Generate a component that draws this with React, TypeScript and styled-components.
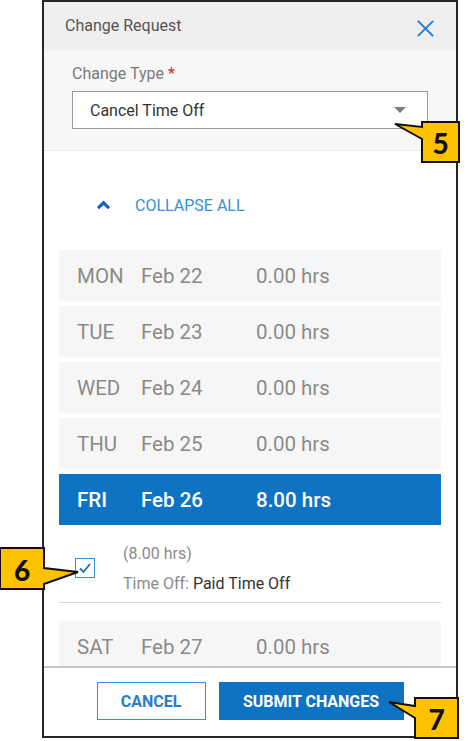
import React from 'react';
import styled, { createGlobalStyle } from 'styled-components';

const GlobalStyle = createGlobalStyle`
  html, body {
    margin: 0;
    padding: 0;
    background: #fff;
  }
  body {
    font-family: Roboto, "Noto Sans", Arial, sans-serif;
  }
  * {
    box-sizing: border-box;
  }
`;

const BLUE = '#0f73c4';

const Stage = styled.div`
  position: relative;
  width: 468px;
  height: 741px;
  overflow: hidden;
`;

const Panel = styled.div`
  margin-left: 42px;
  width: 416px;
  height: 738px;
  border: 2px solid #262626;
  display: flex;
  flex-direction: column;
  overflow: hidden;
  background: #fff;
`;

const Header = styled.div`
  height: 49px;
  flex-shrink: 0;
  background: #efefef;
  display: flex;
  align-items: center;
  justify-content: space-between;
  padding: 0 22px 0 21px;
`;

const Title = styled.div`
  font-size: 16px;
  color: #555;
  margin-top: -2px;
`;

const CloseButton = styled.button`
  border: none;
  background: none;
  padding: 0;
  margin-top: 3px;
  width: 17px;
  height: 17px;
  display: flex;
  cursor: pointer;
`;

const TypeSection = styled.div`
  flex-shrink: 0;
  height: 100px;
  background: #f7f7f7;
  border-bottom: 1px solid #e9e9e9;
  padding: 13px 28px 0 28px;
`;

const FieldLabel = styled.div`
  font-size: 16px;
  color: #7a7a7a;
  margin-bottom: 8px;
  span {
    color: #d9262e;
  }
`;

const SelectBox = styled.div`
  height: 38px;
  border: 1px solid #9a9a9a;
  background: #fff;
  display: flex;
  align-items: center;
  justify-content: space-between;
  padding: 0 21px 0 17px;
  font-size: 16px;
  color: #333;
`;

const Caret = styled.div`
  width: 0;
  height: 0;
  border-left: 6px solid transparent;
  border-right: 6px solid transparent;
  border-top: 6px solid #7a7a7a;
`;

const Scroll = styled.div`
  flex: 1;
  overflow: hidden;
  padding: 0 15px 0 15px;
`;

const CollapseRow = styled.div`
  height: 24px;
  margin: 42px 0 33px 37px;
  display: flex;
  align-items: center;
  gap: 24px;
  font-size: 16px;
  color: #3a8fd7;
  cursor: pointer;
`;

const DayRow = styled.div<{ $active?: boolean }>`
  height: 51px;
  margin-bottom: ${(p) => (p.$active ? '0' : '5px')};
  display: flex;
  align-items: center;
  padding-left: 18px;
  font-size: 20.5px;
  background: ${(p) => (p.$active ? BLUE : '#f6f6f6')};
  color: ${(p) => (p.$active ? '#fff' : '#8a8a8a')};
  font-weight: ${(p) => (p.$active ? 500 : 400)};
`;

const DayName = styled.div`
  width: 64px;
`;

const DayDate = styled.div`
  width: 115px;
`;

const Detail = styled.div`
  display: flex;
  align-items: center;
  padding: 19px 0 9px 16px;
  border-bottom: 1.5px solid #d4d4d4;
  margin-bottom: 18px;
`;

const Check = styled.div`
  width: 20px;
  height: 20px;
  border: 1.5px solid #3b90d8;
  background: #fff;
  display: flex;
  align-items: center;
  justify-content: center;
  margin-right: 28px;
  margin-top: -2px;
`;

const DetailText = styled.div`
  display: flex;
  flex-direction: column;
  gap: 11px;
  font-size: 16px;
  line-height: 19px;
  color: #8a8a8a;
  b {
    font-weight: 400;
    color: #333;
  }
`;

const Footer = styled.div`
  flex-shrink: 0;
  height: 70px;
  border-top: 2px solid #c6c6c6;
  display: flex;
  align-items: center;
  justify-content: center;
  gap: 13px;
  padding-bottom: 2px;
`;

const Button = styled.button<{ $primary?: boolean }>`
  height: 38px;
  padding: 0;
  width: ${(p) => (p.$primary ? '185px' : '109px')};
  border: ${(p) => (p.$primary ? `1px solid ${BLUE}` : '1.5px solid #3a8fd7')};
  background: ${(p) => (p.$primary ? BLUE : '#fff')};
  color: ${(p) => (p.$primary ? '#fff' : '#2b7cc9')};
  font-family: Roboto, Arial, sans-serif;
  font-weight: 700;
  font-size: 16px;
  cursor: pointer;
`;

/* numbered yellow callouts that sit over the screenshot */
const CalloutWrap = styled.div<{ $x: number; $y: number; $w: number; $h: number }>`
  position: absolute;
  left: ${(p) => p.$x}px;
  top: ${(p) => p.$y}px;
  width: ${(p) => p.$w}px;
  height: ${(p) => p.$h}px;
  pointer-events: none;
  svg {
    position: absolute;
    left: 0;
    top: 0;
    overflow: visible;
  }
`;

const CalloutNum = styled.div<{ $x: number; $y: number; $w: number; $h: number }>`
  position: absolute;
  left: ${(p) => p.$x}px;
  top: ${(p) => p.$y}px;
  width: ${(p) => p.$w}px;
  height: ${(p) => p.$h}px;
  display: flex;
  align-items: center;
  justify-content: center;
  font-family: Lato, "Open Sans", Arial, sans-serif;
  font-weight: 900;
  font-size: 28px;
  color: #111;
  padding-top: 2px;
`;

type Box = { x: number; y: number; w: number; h: number };

function Callout({ n, box, tip, y1, y2 }: { n: string; box: Box; tip: [number, number]; y1: number; y2: number }) {
  const left = tip[0] < box.x;
  const minX = Math.min(box.x, tip[0]);
  const maxX = Math.max(box.x + box.w, tip[0]);
  const minY = Math.min(box.y, tip[1]);
  const maxY = Math.max(box.y + box.h, tip[1]);
  const ox = (v: number) => v - minX;
  const oy = (v: number) => v - minY;
  const bx = box.x, by = box.y, bw = box.w, bh = box.h;
  const pts = left
    ? [[bx, by], [bx + bw, by], [bx + bw, by + bh], [bx, by + bh], [bx, y2], [tip[0], tip[1]], [bx, y1]]
    : [[bx, by], [bx + bw, by], [bx + bw, y1], [tip[0], tip[1]], [bx + bw, y2], [bx + bw, by + bh], [bx, by + bh]];
  return (
    <CalloutWrap $x={minX} $y={minY} $w={maxX - minX} $h={maxY - minY}>
      <svg width={maxX - minX} height={maxY - minY}>
        <polygon
          points={pts.map(([a, b]) => `${ox(a)},${oy(b)}`).join(' ')}
          fill="#fec200"
          stroke="#111"
          strokeWidth="2"
          strokeLinejoin="miter"
        />
      </svg>
      <CalloutNum $x={ox(bx)} $y={oy(by)} $w={bw} $h={bh}>{n}</CalloutNum>
    </CalloutWrap>
  );
}

const days = [
  { d: 'MON', date: 'Feb 22', hrs: '0.00 hrs' },
  { d: 'TUE', date: 'Feb 23', hrs: '0.00 hrs' },
  { d: 'WED', date: 'Feb 24', hrs: '0.00 hrs' },
  { d: 'THU', date: 'Feb 25', hrs: '0.00 hrs' },
];

export default function App() {
  return (
    <Stage>
      <GlobalStyle />
      <Panel>
        <Header>
          <Title>Change Request</Title>
          <CloseButton aria-label="close">
            <svg width="17" height="17" viewBox="0 0 17 17">
              <path d="M1.5 1.5 L15.5 15.5 M15.5 1.5 L1.5 15.5" stroke="#2a7fd2" strokeWidth="1.9" strokeLinecap="square" />
            </svg>
          </CloseButton>
        </Header>

        <TypeSection>
          <FieldLabel>
            Change Type <span>*</span>
          </FieldLabel>
          <SelectBox>
            Cancel Time Off
            <Caret />
          </SelectBox>
        </TypeSection>

        <Scroll>
          <CollapseRow>
            <svg width="15" height="10" viewBox="0 0 15 10">
              <polyline points="2,8.2 7.5,2.8 13,8.2" fill="none" stroke="#1766b5" strokeWidth="3.2" />
            </svg>
            COLLAPSE ALL
          </CollapseRow>

          {days.map((r) => (
            <DayRow key={r.d}>
              <DayName>{r.d}</DayName>
              <DayDate>{r.date}</DayDate>
              <div>{r.hrs}</div>
            </DayRow>
          ))}

          <DayRow $active>
            <DayName>FRI</DayName>
            <DayDate>Feb 26</DayDate>
            <div>8.00 hrs</div>
          </DayRow>

          <Detail>
            <Check>
              <svg width="14" height="12" viewBox="0 0 14 12">
                <polyline points="2,6.5 5.5,10 12,2" fill="none" stroke="#1f6fbf" strokeWidth="1.8" />
              </svg>
            </Check>
            <DetailText>
              <div>(8.00 hrs)</div>
              <div>
                Time Off: <b>Paid Time Off</b>
              </div>
            </DetailText>
          </Detail>

          <DayRow>
            <DayName>SAT</DayName>
            <DayDate>Feb 27</DayDate>
            <div>0.00 hrs</div>
          </DayRow>
        </Scroll>

        <Footer>
          <Button>CANCEL</Button>
          <Button $primary>SUBMIT CHANGES</Button>
        </Footer>
      </Panel>

      <Callout n="5" box={{ x: 422, y: 122, w: 37, h: 40 }} tip={[395, 124]} y1={127} y2={139} />
      <Callout n="6" box={{ x: 0, y: 548, w: 44, h: 41 }} tip={[78, 572]} y1={568} y2={584} />
      <Callout n="7" box={{ x: 415, y: 698, w: 43, h: 40 }} tip={[389, 702]} y1={706} y2={718} />
    </Stage>
  );
}
